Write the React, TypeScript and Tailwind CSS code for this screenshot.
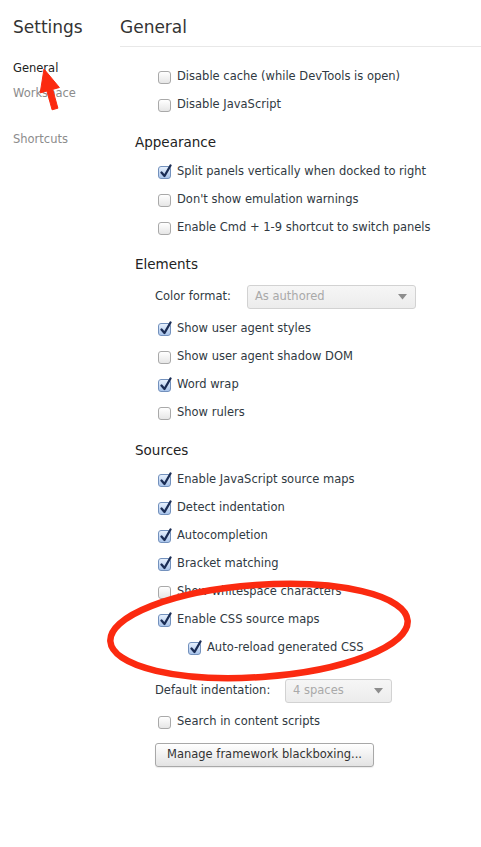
import React from "react";

const FONT = { fontFamily: '"DejaVu Sans", "Liberation Sans", sans-serif' };

function Box({ checked }: { checked?: boolean }) {
  if (checked) {
    return (
      <span className="relative inline-block w-[13px] h-[13px] shrink-0 rounded-[3px] border border-[#7391bd] bg-linear-to-b from-[#e6f0fd] to-[#a9c4ea]">
        <svg
          className="absolute left-[0px] top-[-3px]"
          width="14"
          height="15"
          viewBox="0 0 14 15"
        >
          <path
            d="M2.5 8.5 L5.5 12 L11.5 1.5"
            fill="none"
            stroke="#1b2d55"
            strokeWidth="2.3"
            strokeLinecap="round"
            strokeLinejoin="round"
          />
        </svg>
      </span>
    );
  }
  return (
    <span className="inline-block w-[13px] h-[13px] shrink-0 rounded-[3px] border border-[#a9a9a9] bg-linear-to-b from-white to-[#e6e6e6]" />
  );
}

function Row({
  label,
  checked,
  indent,
}: {
  label: string;
  checked?: boolean;
  indent?: boolean;
}) {
  return (
    <div
      className={
        "h-[28px] pt-[4px] flex items-center gap-[6px] " + (indent ? "pl-[33px]" : "pl-[3px]")
      }
    >
      <Box checked={checked} />
      <span className="text-[11.5px] text-[#303942] whitespace-nowrap">{label}</span>
    </div>
  );
}

function Header({ title, className }: { title: string; className?: string }) {
  return (
    <div
      className={
        "h-[28px] flex items-center -ml-[20px] text-[13.5px] text-[#222] " + (className || "")
      }
    >
      {title}
    </div>
  );
}

function Select({ value, width }: { value: string; width: string }) {
  return (
    <div
      className={
        "h-[24px] rounded-[3px] border border-[#d2d2d2] bg-linear-to-b from-[#f6f6f6] to-[#ececec] flex items-center justify-between pl-[7px] pr-[8px] text-[11.5px] text-[#a9a9a9] " +
        width
      }
    >
      <span>{value}</span>
      <svg width="9" height="6" viewBox="0 0 9 6">
        <path d="M0 0 L9 0 L4.5 5.5 Z" fill="#8d8d8d" />
      </svg>
    </div>
  );
}

export default function App() {
  return (
    <div
      className="relative w-[481px] h-[847px] bg-white overflow-hidden flex"
      style={FONT}
    >
      {/* Sidebar */}
      <div className="w-[120px] shrink-0 pl-[13px] flex flex-col">
        <div className="pt-[17px] leading-[20px] text-[17px] text-[#333]">Settings</div>
        <div className="mt-[21px] leading-[20px] text-[11.5px] text-[#222]">General</div>
        <div className="mt-[5px] leading-[20px] text-[11.5px] text-[#8c8c8c]">Workspace</div>
        <div className="mt-[26px] leading-[20px] text-[11.5px] text-[#8c8c8c]">Shortcuts</div>
      </div>

      {/* Main */}
      <div className="flex-1 flex flex-col">
        <div className="h-[47px] border-b border-[#e8e8e8] pt-[17px] leading-[20px] text-[17px] text-[#333]">
          General
        </div>
        <div className="pl-[35px] pt-[14px] flex flex-col">
          <Row label="Disable cache (while DevTools is open)" />
          <Row label="Disable JavaScript" />

          <Header title="Appearance" className="mt-[11px]" />
          <Row label="Split panels vertically when docked to right" checked />
          <Row label="Don't show emulation warnings" />
          <Row label="Enable Cmd + 1-9 shortcut to switch panels" />

          <Header title="Elements" className="mt-[10px]" />
          <div className="h-[35px] pt-[2px] flex items-center">
            <span className="text-[11.5px] text-[#303942] w-[92px]">Color format:</span>
            <Select value="As authored" width="w-[169px]" />
          </div>
          <Row label="Show user agent styles" checked />
          <Row label="Show user agent shadow DOM" />
          <Row label="Word wrap" checked />
          <Row label="Show rulers" />

          <Header title="Sources" className="mt-[11px]" />
          <Row label="Enable JavaScript source maps" checked />
          <Row label="Detect indentation" checked />
          <Row label="Autocompletion" checked />
          <Row label="Bracket matching" checked />
          <Row label="Show whitespace characters" />
          <Row label="Enable CSS source maps" checked />
          <Row label="Auto-reload generated CSS" checked indent />

          <div className="mt-[14px] h-[32px] pt-[2px] flex items-center">
            <span className="text-[11.5px] text-[#303942] w-[130px]">Default indentation:</span>
            <Select value="4 spaces" width="w-[107px]" />
          </div>
          <Row label="Search in content scripts" />
          <div className="mt-[7px]">
            <button className="h-[24px] w-[219px] rounded-[3px] border border-[#a8a8a8] bg-linear-to-b from-white to-[#e3e3e3] text-[11.5px] text-[#333] shadow-[0_1px_1px_rgba(0,0,0,0.08)]">
              Manage framework blackboxing...
            </button>
          </div>
        </div>
      </div>

      {/* Annotations overlay */}
      <svg
        className="absolute left-0 top-0 pointer-events-none"
        width="481"
        height="847"
        viewBox="0 0 481 847"
      >
        <ellipse
          cx="259"
          cy="631"
          rx="149"
          ry="46"
          transform="rotate(-4 259 631)"
          fill="none"
          stroke="#fb2a10"
          strokeWidth="6.5"
        />
        <path
          d="M44 69 L59.4 87.5 L52.7 89.4 L57.9 108.2 L52.1 109.8 L46.9 91 L40.2 92.9 Z"
          fill="#fb2a10"
          stroke="#fb2a10"
          strokeWidth="1"
          strokeLinejoin="round"
        />
      </svg>
    </div>
  );
}
